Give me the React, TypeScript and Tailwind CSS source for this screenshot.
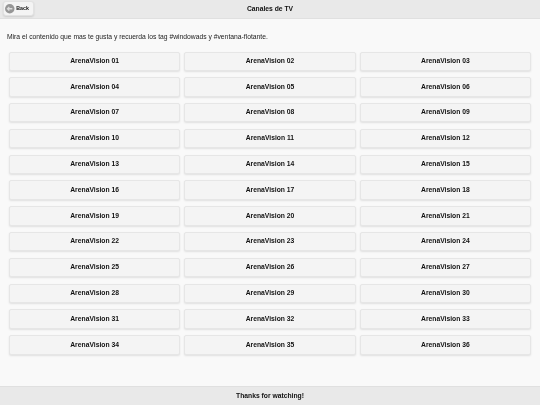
export default function App() {
  const items = Array.from({ length: 36 }, (_, i) => String(i + 1).padStart(2, "0"));
  return (
    <div className="bg-[#f9f9f9]">
      <div className="flex h-[405px] w-[540px] flex-col overflow-hidden bg-[#f9f9f9] font-['Liberation_Sans',sans-serif] text-[#111] blur-[0.25px]">
        <header className="relative flex h-[18.75px] shrink-0 items-center justify-center border-b border-[#e0e0e0] bg-[#e9e9e9]">
          <span className="text-[6.75px] font-bold leading-none">Canales de TV</span>
          <button className="absolute left-[2.5px] top-[1.25px] flex h-[15px] w-[31.5px] items-center gap-[1.5px] rounded-[3px] border border-[#e2e2e2] bg-[#f4f4f4] pl-[1.75px] shadow-[0_1px_2px_rgba(0,0,0,0.12)]">
            <svg width="9.5" height="9.5" viewBox="0 0 11 11" className="shrink-0">
              <circle cx="5.5" cy="5.5" r="5.5" fill="#969696" />
              <path d="M8.5 5.5H3M5 3.3 2.8 5.5 5 7.7" fill="none" stroke="#dcdcdc" strokeWidth="1.5" />
            </svg>
            <span className="text-[5.25px] font-bold leading-none">Back</span>
          </button>
        </header>
        <main className="flex-1 px-[7px] pt-[13px]">
          <p className="text-[6.75px] leading-[9px] text-[#222]">
            Mira el contenido que mas te gusta y recuerda los tag #windowads y #ventana-flotante.
          </p>
          <div className="mt-[10.75px] grid grid-cols-3 gap-x-[4.25px] gap-y-[6.55px] px-[2px]">
            {items.map((n) => (
              <button
                key={n}
                className="flex h-[19.25px] items-center justify-center rounded-[2px] border border-[#e6e6e6] bg-[#f4f4f4] text-[6.75px] font-bold leading-none text-[#111] shadow-[0_1px_2px_rgba(0,0,0,0.1)]"
              >
                ArenaVision {n}
              </button>
            ))}
          </div>
        </main>
        <footer className="flex h-[19px] shrink-0 items-center justify-center border-t border-[#e0e0e0] bg-[#e9e9e9]">
          <span className="text-[6.75px] font-bold leading-none">Thanks for watching!</span>
        </footer>
      </div>
    </div>
  );
}
